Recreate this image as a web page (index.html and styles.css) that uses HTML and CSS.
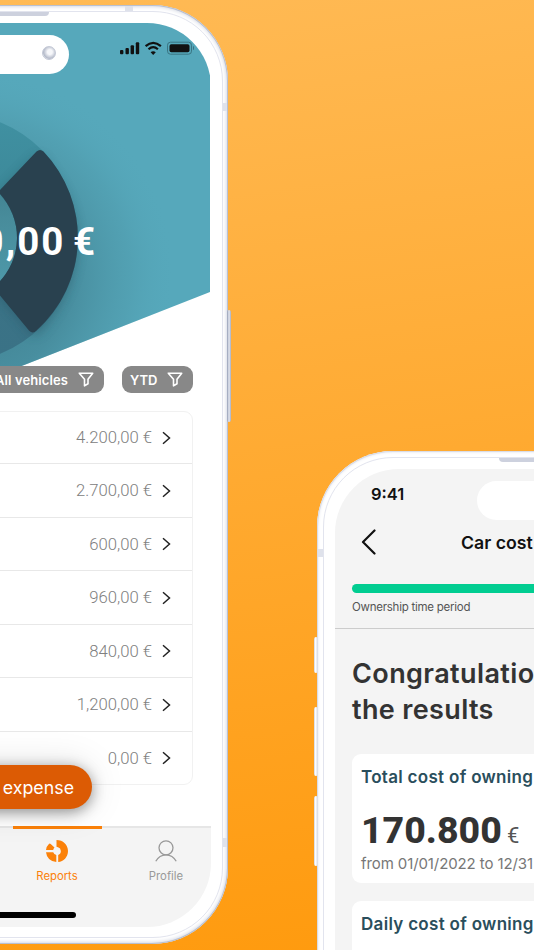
FILE: index.html
```html
<!DOCTYPE html>
<html lang="en">
<head>
<meta charset="utf-8">
<title>Car costs</title>
<link rel="stylesheet" href="styles.css">
</head>
<body>
<main class="stage">
  <section class="phone phone-reports">
    <i class="side-key power"></i>
    <i class="antenna antenna-top"></i><i class="antenna antenna-upper"></i><i class="antenna antenna-lower"></i>
    <div class="bezel"><i class="speaker"></i></div>
    <div class="screen">
      <div class="island"><i class="lens"></i></div>
      <header class="hero">
        <svg class="hero-art" width="415" height="353" viewBox="-205 23 415 353">
          <defs>
            <radialGradient id="shade" gradientUnits="userSpaceOnUse" cx="-30" cy="275" r="205">
              <stop offset="0" stop-color="#2f6472" stop-opacity=".7"/>
              <stop offset=".5" stop-color="#3a7483" stop-opacity=".5"/>
              <stop offset=".78" stop-color="#458796" stop-opacity=".22"/>
              <stop offset="1" stop-color="#56a8bb" stop-opacity="0"/>
            </radialGradient>
            <linearGradient id="ring" x1="0" y1="0" x2="0" y2="1">
              <stop offset="0" stop-color="#4091a2"/><stop offset=".4" stop-color="#3c8797"/>
              <stop offset=".7" stop-color="#3b7386"/><stop offset="1" stop-color="#3a7286"/>
            </linearGradient>
            <linearGradient id="hub" x1="0" y1="0" x2="0" y2="1">
              <stop offset="0" stop-color="#3f7f8e"/><stop offset=".35" stop-color="#488c9b"/><stop offset="1" stop-color="#4f9cad"/>
            </linearGradient>
            <filter id="soft" x="-30%" y="-30%" width="160%" height="160%"><feGaussianBlur stdDeviation="6"/></filter>
          </defs>
          <path d="M-205 23H210V292L-4 376H-205Z" fill="#56a8bb"/>
          <path d="M-205 23H210V292L-4 376H-205Z" fill="url(#shade)"/>
          <circle cx="-47" cy="238" r="125" fill="url(#ring)"/>
          <path d="M-5 198L35 158Q42 153 46 164Q76 200 77 242Q76 290 40 332Q35 337 30 332L-2 294Z" fill="#234c5a" opacity=".45" filter="url(#soft)"/>
          <circle cx="-47" cy="238" r="64" fill="url(#hub)"/>
          <path d="M-1 191L36.500 151.500Q40 148.500 43.500 151.500A125 125 0 0 1 36.500 330.500Q32.800 334.300 29.200 330.700L-3 292V284A64 64 0 0 0 -1 193Z" fill="#29414f"/>
        </svg>
        <div class="status">
          <svg width="74" height="14" viewBox="0 0 74 14">
            <g fill="#111"><rect y="9" width="3.400" height="4.200" rx="1"/><rect x="5.500" y="7" width="3.400" height="6.200" rx="1"/><rect x="10.600" y="4.200" width="3.400" height="9" rx="1"/><rect x="15.800" y="1.200" width="3.400" height="12" rx="1"/>
            <rect x="49.500" y="3.200" width="20" height="8" rx="1.800"/><path d="M30.600 11.200Q33.200 9.100 35.800 11.200L33.200 13.900Z"/></g>
            <path d="M25.600 5.100Q33.200-1.400 40.900 5.100M28.500 8.200Q33.200 4 37.900 8.200" fill="none" stroke="#111" stroke-width="2.200"/>
            <rect x="47.500" y="1.200" width="24" height="12" rx="3" fill="none" stroke="#3a7482" stroke-width="1"/>
            <path d="M73 5v4q1.300-.5 1.300-2T73 5" fill="#3a7482"/>
          </svg>
        </div>
        <div class="total">0,00 €</div>
      </header>
      <div class="filters">
        <button class="chip chip-vehicles"><span>All vehicles</span><svg width="16" height="15" viewBox="0 0 16 15"><path d="M1.300 1.200H14.700L10 7.300V11.800L6.500 13.800V7.300Z"/></svg></button>
        <button class="chip chip-period"><span>YTD</span><svg width="16" height="15" viewBox="0 0 16 15"><path d="M1.300 1.200H14.700L10 7.300V11.800L6.500 13.800V7.300Z"/></svg></button>
      </div>
      <ul class="expenses">
        <li><span>4.200,00 €</span><svg width="9" height="14" viewBox="0 0 9 14"><path d="M1 1.200 7.500 7 1 12.800"/></svg></li>
        <li><span>2.700,00 €</span><svg width="9" height="14" viewBox="0 0 9 14"><path d="M1 1.200 7.500 7 1 12.800"/></svg></li>
        <li><span>600,00 €</span><svg width="9" height="14" viewBox="0 0 9 14"><path d="M1 1.200 7.500 7 1 12.800"/></svg></li>
        <li><span>960,00 €</span><svg width="9" height="14" viewBox="0 0 9 14"><path d="M1 1.200 7.500 7 1 12.800"/></svg></li>
        <li><span>840,00 €</span><svg width="9" height="14" viewBox="0 0 9 14"><path d="M1 1.200 7.500 7 1 12.800"/></svg></li>
        <li><span>1,200,00 €</span><svg width="9" height="14" viewBox="0 0 9 14"><path d="M1 1.200 7.500 7 1 12.800"/></svg></li>
        <li><span>0,00 €</span><svg width="9" height="14" viewBox="0 0 9 14"><path d="M1 1.200 7.500 7 1 12.800"/></svg></li>
      </ul>
      <button class="fab">expense</button>
      <nav class="tabs">
        <a class="tab tab-active">
          <svg width="22" height="22" viewBox="0 0 22 22" fill="#fb8109"><path d="M10.500 0C17 0 22 4.800 22 11S17.500 21.500 12.200 22V14.900A4 4 0 0 0 12 7.300L10.500 6.800Z"/><path d="M0 12.200H7.200Q8 14.500 10.300 14.900V22Q1 20.800 0 12.200Z"/><path d="M0 10Q.3 6.300 2.900 3.900Q3.800 3.200 4.700 4L8.500 7.500Q7.400 8.500 7.200 10Z"/></svg>
          <span>Reports</span>
        </a>
        <a class="tab">
          <svg width="22" height="22" viewBox="0 0 22 22" fill="none" stroke="#999" stroke-width="1.300"><circle cx="11" cy="7.800" r="7"/><path d="M.8 21.300Q4.300 14.800 11 14.800T21.200 21.300"/></svg>
          <span>Profile</span>
        </a>
      </nav>
      <i class="home-bar"></i>
    </div>
  </section>

  <section class="phone phone-result">
    <i class="side-key mute"></i><i class="side-key vol-up"></i><i class="side-key vol-down"></i>
    <i class="antenna antenna-left"></i>
    <div class="bezel"><i class="speaker"></i></div>
    <div class="screen">
      <div class="island"></div>
      <div class="clock">9:41</div>
      <header class="topbar">
        <svg width="16" height="26" viewBox="0 0 16 26"><path d="M13.500 1.500 2 13 13.500 24.500"/></svg>
        <h1>Car cost</h1>
      </header>
      <div class="progress"></div>
      <p class="step">Ownership time period</p>
      <div class="results">
        <h2><span>Congratulations</span><br>the results</h2>
        <article class="card">
          <h3 class="title-total">Total cost of owning</h3>
          <p class="amount"><b>170.800</b><span>€</span></p>
          <p class="range">from 01/01/2022 to 12/31</p>
        </article>
        <article class="card">
          <h3 class="title-daily">Daily cost of owning</h3>
        </article>
      </div>
    </div>
  </section>
</main>
</body>
</html>
```
FILE: styles.css
```css
* { box-sizing: border-box; }
body { margin: 0; font-family: Inter, "Liberation Sans", sans-serif; }
h1, h2, h3, p, ul { margin: 0; padding: 0; }
button { border: 0; font: inherit; }
i { display: block; }

.stage {
  position: relative;
  width: 534px;
  height: 950px;
  overflow: hidden;
  background: linear-gradient(172deg, #ffba55 0%, #ffaa31 50%, #ff9a0d 100%);
}

/* Devices */
.phone {
  position: absolute;
  width: 451px;
  height: 939px;
  padding: 18px 17.500px 17px 18px;
  border-radius: 76px;
  background: #fff;
  box-shadow: inset 0 0 0 1px #b9c0d0, inset 0 0 4px 1px #c3c8d7;
}
.phone-reports { left: -223px; top: 5px; }
.phone-result { left: 317px; top: 451px; box-shadow: inset 0 0 0 1px #d9dce7, inset 0 0 3px 1px #dfe2ec; }
.bezel {
  position: absolute;
  inset: 6px 5px 6px 6px;
  border: 1px solid #e2e4ee;
  border-radius: 70px;
  background: #fff;
}
.speaker {
  width: 91px;
  height: 4px;
  margin: 0 auto;
  border-radius: 0 0 4px 4px;
  background: #cdd1de;
}
.phone-result .speaker { margin-left: 175px; }
.screen {
  position: relative;
  display: flex;
  flex-direction: column;
  height: 904px;
  border-radius: 64px;
  overflow: hidden;
  background: #fff;
}
.island {
  position: absolute;
  z-index: 2;
  left: 141px;
  top: 12px;
  width: 133px;
  height: 39px;
  padding: 11px 13px;
  border-radius: 20px;
  background: #fff;
}
.lens {
  width: 14px;
  height: 14px;
  margin-left: auto;
  border: 1.500px solid #c3c8d5;
  border-radius: 50%;
  background: radial-gradient(circle at 57% 42%, #f6f7fa 25%, #b4bac9 65%, #eef0f5 80%);
}
.antenna { position: absolute; background: #dfe2eb; }
.antenna-top { right: 95px; top: 1px; width: 8px; height: 6px; }
.antenna-upper { right: 1px; top: 98px; width: 5px; height: 8px; }
.antenna-lower { right: 1px; top: 833px; width: 5px; height: 9px; }
.antenna-left { left: 1px; top: 98px; width: 6px; height: 8px; }
.side-key { position: absolute; border-radius: 2px; }
.power {
  left: 450px;
  top: 305px;
  width: 4px;
  height: 112px;
  background: linear-gradient(90deg, #a6aec2 0 15%, #e6e9f2 50%, #a6aec2 100%);
}
.mute, .vol-up, .vol-down { left: -3px; width: 4px; background: linear-gradient(90deg, #ccd0dc, #fff 35%, #d5d8e2); }
.mute { top: 186px; height: 36px; }
.vol-up { top: 256px; height: 69px; }
.vol-down { top: 345px; height: 70px; }

/* Reports screen */
.hero { position: relative; flex: none; height: 343px; padding-top: 18px; color: #fff; }
.hero-art { position: absolute; left: 0; top: 0; }
.status { position: relative; display: flex; justify-content: flex-end; padding-right: 17px; }
.total {
  position: relative;
  margin-top: 163px;
  padding-right: 113.500px;
  text-align: right;
  font-family: Roboto, Inter, sans-serif;
  font-size: 38.500px;
  line-height: 48px;
  font-weight: 700;
  letter-spacing: 2px;
  word-spacing: -4px;
  white-space: nowrap;
}
.filters { position: relative; display: flex; justify-content: flex-end; gap: 18px; padding-right: 17.500px; }
.chip {
  display: flex;
  align-items: center;
  justify-content: flex-end;
  height: 27px;
  padding: 0 10px 0 8px;
  border-radius: 9px;
  background: #888;
  color: #fff;
  font-size: 13px;
  font-weight: 600;
  white-space: nowrap;
}
.chip svg { flex: none; margin-left: auto; fill: none; stroke: #fff; stroke-width: 1.600; stroke-linejoin: round; }
.chip-period { width: 71px; }
.chip-vehicles { width: 118px; letter-spacing: .1px; }
.chip-vehicles svg { margin-left: 10px; }
.expenses {
  flex: none;
  margin: 17.500px 17.500px 0 18px;
  border: 1px solid #f1f1f1;
  border-radius: 9px;
  list-style: none;
}
.expenses li {
  display: flex;
  align-items: center;
  justify-content: flex-end;
  gap: 10px;
  height: 53.500px;
  padding: 1px 21px 0 0;
  border-bottom: 1px solid #e8e8e8;
  color: #808080;
  font-family: Roboto, Inter, sans-serif;
  font-size: 16.700px;
  font-weight: 300;
}
.expenses li:first-child { height: 52.500px; }
.expenses li:last-child { height: 52.500px; border-bottom: 0; }
.expenses svg { fill: none; stroke: #222; stroke-width: 1.500; }
.fab {
  position: absolute;
  z-index: 2;
  left: 82px;
  top: 742px;
  width: 215px;
  height: 44px;
  padding: 0 18px 0 0;
  border-radius: 22px;
  background: #dc5b04;
  box-shadow: 0 3px 14px rgba(0, 0, 0, .4), 0 0 36px rgba(0, 0, 0, .13);
  color: #fff;
  text-align: right;
  font-size: 17.800px;
}
.tabs {
  flex: none;
  display: flex;
  justify-content: flex-end;
  height: 101px;
  margin-top: auto;
  background: #f4f4f4;
  box-shadow: inset 0 2px #e6e6e6;
}
.tab {
  display: flex;
  flex-direction: column;
  align-items: center;
  gap: 7px;
  width: 89px;
  padding-top: 13.500px;
  color: #999;
  font-size: 11.300px;
  line-height: 14px;
}
.tab + .tab { margin-left: 20px; }
.tab-active { color: #fb8109; box-shadow: inset 0 3px #fb8109; }
.home-bar {
  position: absolute;
  left: 134px;
  top: 888.500px;
  width: 147px;
  height: 6px;
  border-radius: 3px;
  background: #000;
}

/* Result screen */
.phone-result .screen { background: #f4f4f4; white-space: nowrap; }
.phone-result .island { left: 142px; }
.clock { padding: 15px 0 0 36px; color: #111; font-size: 16.500px; line-height: 20px; font-weight: 600; }
.topbar { display: flex; align-items: center; height: 40px; margin-top: 18px; padding-left: 26px; }
.topbar svg { fill: none; stroke: #111; stroke-width: 2.200; stroke-linecap: round; stroke-linejoin: round; }
.topbar h1 { margin-left: 84px; color: #111; font-size: 17.700px; font-weight: 600; }
.progress { flex: none; height: 9px; margin: 22px 17px 0; border-radius: 5px; background: #01cd91; }
.step {
  flex: none;
  height: 36px;
  padding: 6px 17px 0;
  border-bottom: 1px solid #ccc;
  color: #555;
  font-size: 11.500px;
  line-height: 16px;
  letter-spacing: -.25px;
}
.results { display: flex; flex-direction: column; padding: 27px 17px 0; }
.results h2 { color: #333; font-size: 27px; line-height: 36px; font-weight: 600; letter-spacing: .35px; }
.results h2 span { letter-spacing: .4px; }
.card { height: 129px; margin-top: 18px; padding: 12px 9px; border-radius: 9px; background: #fff; }
h2 + .card { margin-top: 26px; }
.card h3 { color: #2a4e5c; font-size: 17px; line-height: 22px; font-weight: 600; letter-spacing: .3px; }
.amount { display: flex; align-items: baseline; gap: 5px; margin-top: 20px; color: #333; line-height: 44px; }
.amount b { font-family: Roboto, Inter, sans-serif; font-size: 37.500px; font-weight: 800; letter-spacing: 0; }
.amount span { font-family: Roboto, Inter, sans-serif; font-size: 22px; color: #555; }
.range { margin-top: -4px; color: #777; font-size: 15px; line-height: 20px; letter-spacing: -.1px; }
```
